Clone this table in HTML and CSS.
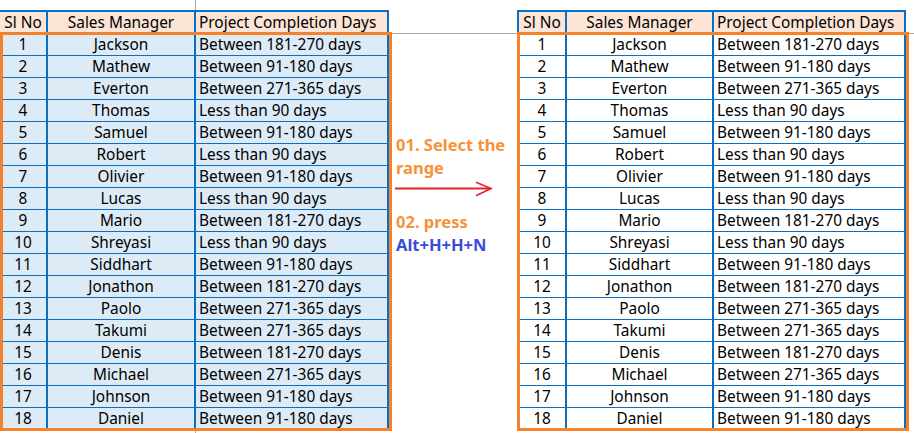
FILE: index.html
```html
<!DOCTYPE html>
<html lang="en">
<head>
<meta charset="utf-8">
<title>Sales Manager project completion</title>
<link rel="stylesheet" href="styles.css">
</head>
<body>
<div class="sheet">
  <div class="block block--left">
    <table class="grid grid--shaded">
      <thead>
        <tr><th class="c-no">Sl No</th><th class="c-name">Sales Manager</th><th class="c-days">Project Completion Days</th></tr>
      </thead>
      <tbody>
        <tr><td>1</td><td>Jackson</td><td class="days">Between 181-270 days</td></tr>
        <tr><td>2</td><td>Mathew</td><td class="days">Between 91-180 days</td></tr>
        <tr><td>3</td><td>Everton</td><td class="days">Between 271-365 days</td></tr>
        <tr><td>4</td><td>Thomas</td><td class="days">Less than 90 days</td></tr>
        <tr><td>5</td><td>Samuel</td><td class="days">Between 91-180 days</td></tr>
        <tr><td>6</td><td>Robert</td><td class="days">Less than 90 days</td></tr>
        <tr><td>7</td><td>Olivier</td><td class="days">Between 91-180 days</td></tr>
        <tr><td>8</td><td>Lucas</td><td class="days">Less than 90 days</td></tr>
        <tr><td>9</td><td>Mario</td><td class="days">Between 181-270 days</td></tr>
        <tr><td>10</td><td>Shreyasi</td><td class="days">Less than 90 days</td></tr>
        <tr><td>11</td><td>Siddhart</td><td class="days">Between 91-180 days</td></tr>
        <tr><td>12</td><td>Jonathon</td><td class="days">Between 181-270 days</td></tr>
        <tr><td>13</td><td>Paolo</td><td class="days">Between 271-365 days</td></tr>
        <tr><td>14</td><td>Takumi</td><td class="days">Between 271-365 days</td></tr>
        <tr><td>15</td><td>Denis</td><td class="days">Between 181-270 days</td></tr>
        <tr><td>16</td><td>Michael</td><td class="days">Between 271-365 days</td></tr>
        <tr><td>17</td><td>Johnson</td><td class="days">Between 91-180 days</td></tr>
        <tr><td>18</td><td>Daniel</td><td class="days">Between 91-180 days</td></tr>
      </tbody>
    </table>
    <div class="selection"></div>
  </div>

  <div class="note">
    <p class="note__step">01. Select the range</p>
    <svg class="note__arrow" width="98" height="16" viewBox="0 0 98 16" aria-hidden="true">
      <line x1="0" y1="7.5" x2="96" y2="7.5" stroke="#E3232A" stroke-width="2.2"/>
      <polyline points="81,1.3 96,7.5 81,14.8" fill="none" stroke="#E3232A" stroke-width="1.6"/>
    </svg>
    <p class="note__step note__step--second">02. press</p>
    <p class="note__keys">Alt+H+H+N</p>
  </div>

  <div class="block block--right">
    <table class="grid">
      <thead>
        <tr><th class="c-no">Sl No</th><th class="c-name c-name--r">Sales Manager</th><th class="c-days c-days--r">Project Completion Days</th></tr>
      </thead>
      <tbody>
        <tr><td>1</td><td>Jackson</td><td class="days">Between 181-270 days</td></tr>
        <tr><td>2</td><td>Mathew</td><td class="days">Between 91-180 days</td></tr>
        <tr><td>3</td><td>Everton</td><td class="days">Between 271-365 days</td></tr>
        <tr><td>4</td><td>Thomas</td><td class="days">Less than 90 days</td></tr>
        <tr><td>5</td><td>Samuel</td><td class="days">Between 91-180 days</td></tr>
        <tr><td>6</td><td>Robert</td><td class="days">Less than 90 days</td></tr>
        <tr><td>7</td><td>Olivier</td><td class="days">Between 91-180 days</td></tr>
        <tr><td>8</td><td>Lucas</td><td class="days">Less than 90 days</td></tr>
        <tr><td>9</td><td>Mario</td><td class="days">Between 181-270 days</td></tr>
        <tr><td>10</td><td>Shreyasi</td><td class="days">Less than 90 days</td></tr>
        <tr><td>11</td><td>Siddhart</td><td class="days">Between 91-180 days</td></tr>
        <tr><td>12</td><td>Jonathon</td><td class="days">Between 181-270 days</td></tr>
        <tr><td>13</td><td>Paolo</td><td class="days">Between 271-365 days</td></tr>
        <tr><td>14</td><td>Takumi</td><td class="days">Between 271-365 days</td></tr>
        <tr><td>15</td><td>Denis</td><td class="days">Between 181-270 days</td></tr>
        <tr><td>16</td><td>Michael</td><td class="days">Between 271-365 days</td></tr>
        <tr><td>17</td><td>Johnson</td><td class="days">Between 91-180 days</td></tr>
        <tr><td>18</td><td>Daniel</td><td class="days">Between 91-180 days</td></tr>
      </tbody>
    </table>
    <div class="selection"></div>
  </div>
</div>
</body>
</html>
```

FILE: styles.css
```css
html, body {
  margin: 0;
  padding: 0;
}

body {
  width: 914px;
  height: 433px;
  overflow: hidden;
  font-family: "Noto Sans", "Open Sans", sans-serif;
  color: #000;
  background:
    linear-gradient(#a6a6a6, #a6a6a6) 0 33px / 100% 1px no-repeat,
    linear-gradient(#a6a6a6, #a6a6a6) 195px 0 / 1px 100% no-repeat,
    #fff;
}

.sheet {
  display: flex;
  align-items: flex-start;
  padding-top: 10px;
}

.block {
  position: relative;
  flex: 0 0 auto;
}

.grid {
  border-collapse: separate;
  border-spacing: 0;
  font-size: 15.4px;
  background: #fff;
}

.grid th,
.grid td {
  height: 20px;
  padding: 1px 0 0;
  line-height: 20px;
  font-weight: normal;
  text-align: center;
  white-space: nowrap;
  border-right: 2px solid #0b6fc1;
  border-bottom: 1px solid #0b6fc1;
}

.grid th {
  border-top: 2px solid #0b6fc1;
  background: #fce4d6;
}

.grid tr > :first-child {
  border-left: 2px solid #0b6fc1;
}

.block--left .grid tr > :first-child {
  border-left: none;
}

.grid tbody tr:last-child td {
  border-bottom-width: 2px;
}

.grid--shaded td {
  background: #ddebf7;
}

.grid .c-no { width: 46px; }
.grid .c-name { width: 146px; }
.grid .c-name--r { width: 145px; }

.grid .c-days,
.grid .days {
  text-align: left;
  padding-left: 3px;
}

.grid th.c-days { width: 188px; }
.grid th.c-days--r { width: 187px; }

.selection {
  position: absolute;
  left: 0;
  top: 22px;
  width: 392px;
  height: 399px;
  box-sizing: border-box;
  border: 3px solid #f5822a;
  pointer-events: none;
}

.note {
  flex: 0 0 128px;
  box-sizing: border-box;
  padding: 124px 0 0 7px;
  display: flex;
  flex-direction: column;
  align-items: flex-start;
}

.note__step,
.note__keys {
  margin: 0;
  width: 118px;
  font-size: 16.5px;
  font-weight: bold;
  line-height: 22.5px;
  color: #f7923a;
}

.note__keys {
  color: #3b4bd6;
}

.note__arrow {
  display: block;
  margin: 2px 0 0 -1px;
}

.note__step--second {
  margin-top: 14px;
}
```
